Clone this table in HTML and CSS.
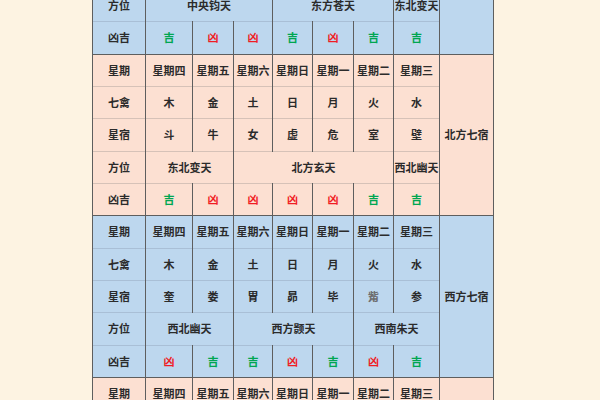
FILE: index.html
```html
<!DOCTYPE html>
<html lang="zh">
<head>
<meta charset="utf-8">
<title>七宿方位表</title>
<link rel="stylesheet" href="styles.css">
</head>
<body>
<table class="grid">
  <colgroup>
    <col class="c-label">
    <col class="c1"><col class="c2"><col class="c3"><col class="c4"><col class="c5"><col class="c6"><col class="c7">
    <col class="c-side">
  </colgroup>
  <tbody>
    <tr class="b">
      <td>方位</td>
      <td colspan="3">中央钧天</td>
      <td colspan="3">东方苍天</td>
      <td>东北变天</td>
      <td rowspan="2" class="side"></td>
    </tr>
    <tr class="b">
      <td>凶吉</td>
      <td class="ji">吉</td><td class="xiong">凶</td><td class="xiong">凶</td><td class="ji">吉</td><td class="xiong">凶</td><td class="ji">吉</td><td class="ji">吉</td>
    </tr>

    <tr class="p sec">
      <td>星期</td>
      <td>星期四</td><td>星期五</td><td>星期六</td><td>星期日</td><td>星期一</td><td>星期二</td><td>星期三</td>
      <td rowspan="5" class="side">北方七宿</td>
    </tr>
    <tr class="p">
      <td>七禽</td>
      <td>木</td><td>金</td><td>土</td><td>日</td><td>月</td><td>火</td><td>水</td>
    </tr>
    <tr class="p">
      <td>星宿</td>
      <td>斗</td><td>牛</td><td>女</td><td>虚</td><td>危</td><td>室</td><td>壁</td>
    </tr>
    <tr class="p">
      <td>方位</td>
      <td colspan="2">东北变天</td>
      <td colspan="4">北方玄天</td>
      <td>西北幽天</td>
    </tr>
    <tr class="p">
      <td>凶吉</td>
      <td class="ji">吉</td><td class="xiong">凶</td><td class="xiong">凶</td><td class="xiong">凶</td><td class="xiong">凶</td><td class="ji">吉</td><td class="ji">吉</td>
    </tr>

    <tr class="b sec">
      <td>星期</td>
      <td>星期四</td><td>星期五</td><td>星期六</td><td>星期日</td><td>星期一</td><td>星期二</td><td>星期三</td>
      <td rowspan="5" class="side">西方七宿</td>
    </tr>
    <tr class="b">
      <td>七禽</td>
      <td>木</td><td>金</td><td>土</td><td>日</td><td>月</td><td>火</td><td>水</td>
    </tr>
    <tr class="b">
      <td>星宿</td>
      <td>奎</td><td>娄</td><td>胃</td><td>昴</td><td>毕</td><td class="faint">觜</td><td>参</td>
    </tr>
    <tr class="b">
      <td>方位</td>
      <td colspan="2">西北幽天</td>
      <td colspan="3">西方颢天</td>
      <td colspan="2">西南朱天</td>
    </tr>
    <tr class="b">
      <td>凶吉</td>
      <td class="xiong">凶</td><td class="ji">吉</td><td class="ji">吉</td><td class="xiong">凶</td><td class="ji">吉</td><td class="xiong">凶</td><td class="ji">吉</td>
    </tr>

    <tr class="p sec">
      <td>星期</td>
      <td>星期四</td><td>星期五</td><td>星期六</td><td>星期日</td><td>星期一</td><td>星期二</td><td>星期三</td>
      <td class="side"></td>
    </tr>
  </tbody>
</table>
</body>
</html>
```

FILE: styles.css
```css
html, body {
  margin: 0;
  padding: 0;
  background: #fdf3e2;
}

body {
  width: 600px;
  height: 400px;
  overflow: hidden;
}

.grid {
  margin: -11px 0 0 92px;
  width: 401px;
  table-layout: fixed;
  border-collapse: collapse;
  font-family: "Noto Sans CJK SC", "Noto Sans", sans-serif;
  font-weight: 700;
  font-size: 11px;
  color: #2b2b2b;
}

.c-label { width: 53px; }
.c1 { width: 47px; }
.c2 { width: 41px; }
.c3 { width: 39px; }
.c4 { width: 40px; }
.c5 { width: 41px; }
.c6 { width: 40px; }
.c7 { width: 46px; }
.c-side { width: 54px; }

.grid tr {
  height: 32.33px;
}

.grid td {
  padding: 0;
  text-align: center;
  vertical-align: middle;
  white-space: nowrap;
  line-height: 1;
  border-left: 1px solid #5e5e5e;
  border-right: 1px solid #5e5e5e;
  border-bottom: none;
}

.b td {
  background: #bdd7ee;
  border-top: 1px solid #a9bfd6;
}

.p td {
  background: #fce0d2;
  border-top: 1px solid #d6c2b8;
}

.sec td {
  border-top: 1px solid #5e5e5e;
}

.ji {
  color: #00a651;
}

.xiong {
  color: #f01c24;
}

.faint {
  color: #6d6d6d;
}
```
